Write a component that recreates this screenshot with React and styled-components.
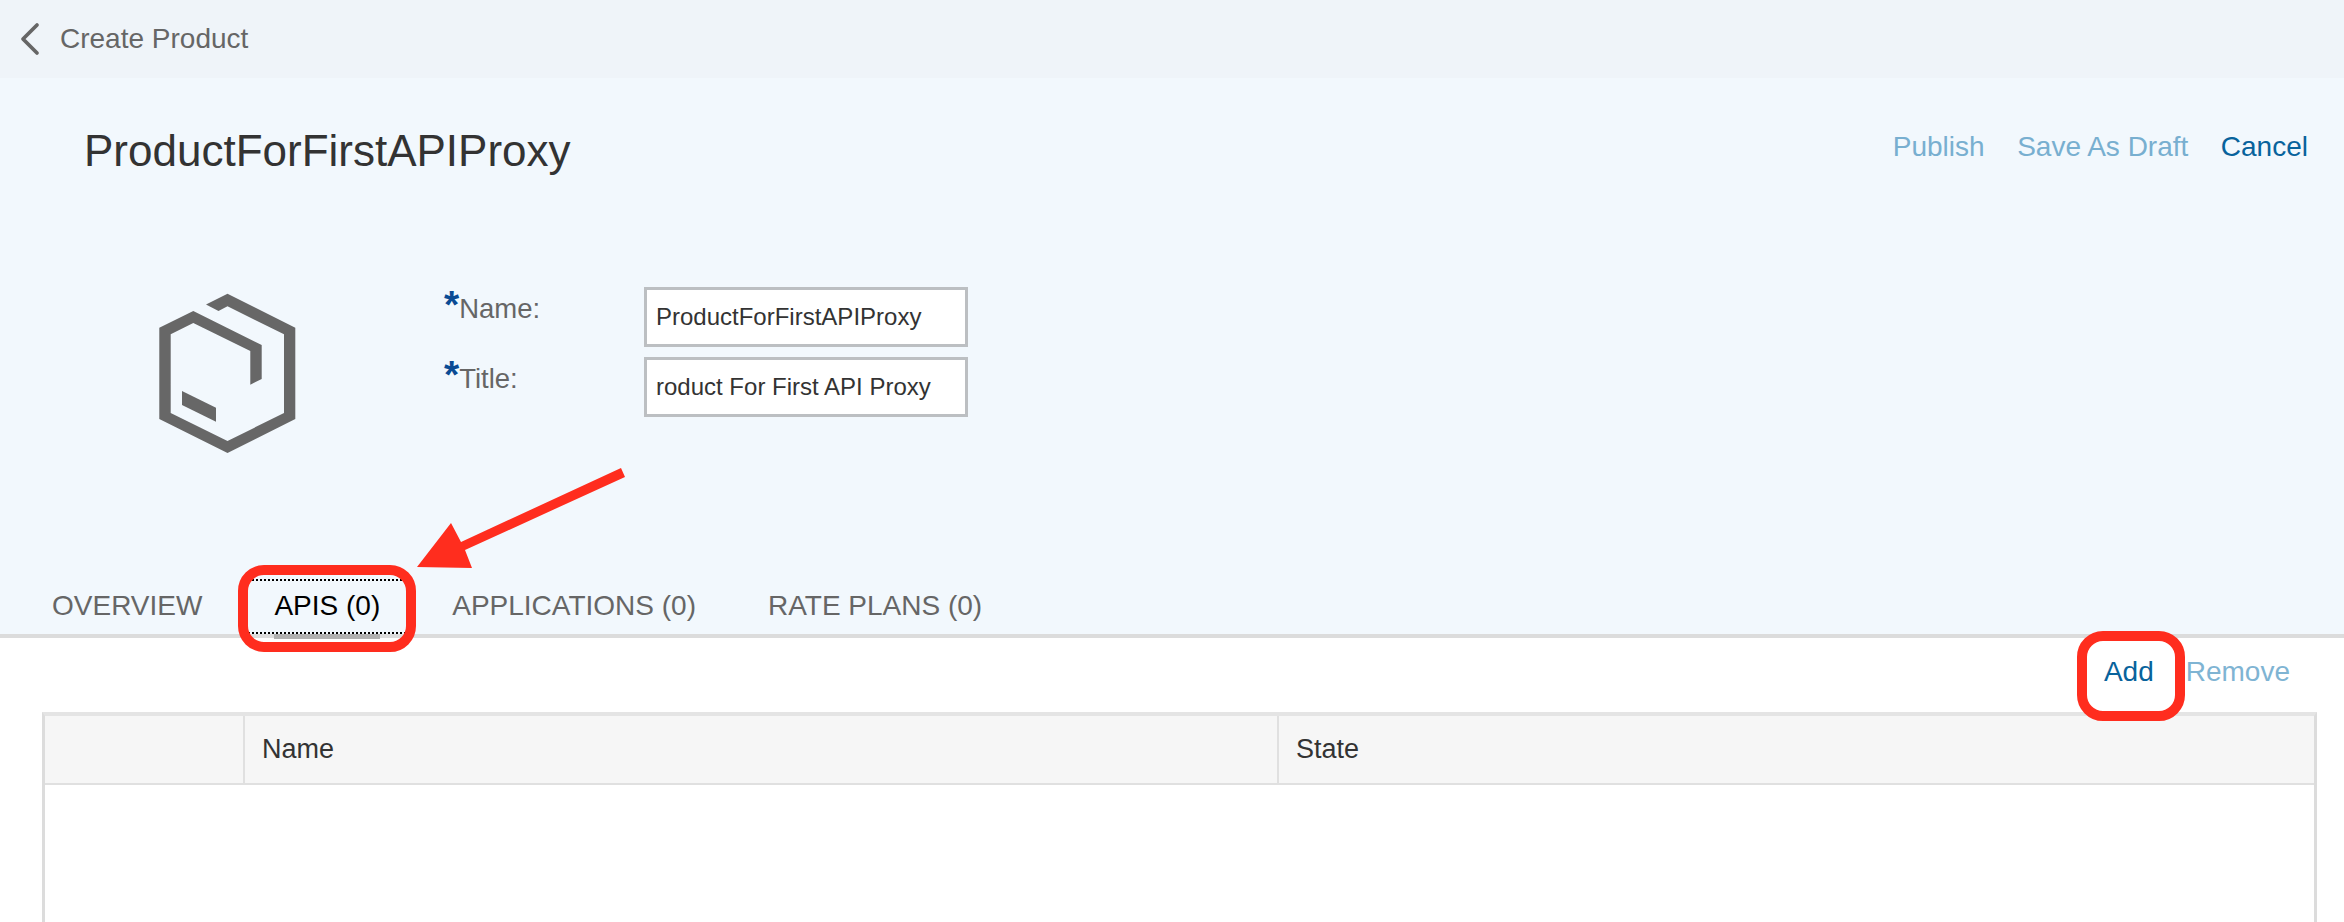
import styled, { createGlobalStyle } from 'styled-components';
import { ChevronLeft } from 'lucide-react';

const GlobalStyle = createGlobalStyle`
  html, body {
    margin: 0;
    padding: 0;
    background: #fff;
    font-family: "Liberation Sans", Arial, sans-serif;
  }
`;

const App = () => {
  return (
    <Page>
      <GlobalStyle />
      <TopBar>
        <BackIcon size={56} strokeWidth={1.6} />
        <TopBarTitle>Create Product</TopBarTitle>
      </TopBar>
      <HeaderPanel>
        <TitleRow>
          <ProductTitle>ProductForFirstAPIProxy</ProductTitle>
          <Actions>
            <ActionLink $disabled>Publish</ActionLink>
            <ActionLink $disabled>Save As Draft</ActionLink>
            <ActionLink>Cancel</ActionLink>
          </Actions>
        </TitleRow>
        <FormRow>
          <BoxIcon viewBox="0 0 180 180" aria-hidden="true">
            <path d="M66 23.500L87.500 12.700L155.300 46.700V138L87.500 172L19.300 138V46.700L53.300 30L121.700 64V98L110.300 103.700V70L53.300 42L30.700 53.300V132L87.500 160L144 132V53.300L87.500 25.300L78.500 30Z" />
            <path d="M42 110L76 126.700V140.700L42 124Z" />
          </BoxIcon>
          <Fields>
            <FieldRow>
              <FieldLabel><Required>*</Required>Name:</FieldLabel>
              <TextInput readOnly value="ProductForFirstAPIProxy" />
            </FieldRow>
            <FieldRow>
              <FieldLabel><Required>*</Required>Title:</FieldLabel>
              <TextInput readOnly value="roduct For First API Proxy" />
            </FieldRow>
          </Fields>
        </FormRow>
        <Tabs>
          <Tab>OVERVIEW</Tab>
          <Tab $active>
            APIS (0)
            <FocusBox />
            <TabRing />
          </Tab>
          <Tab>APPLICATIONS (0)</Tab>
          <Tab>RATE PLANS (0)</Tab>
        </Tabs>
      </HeaderPanel>
      <Toolbar>
        <ToolbarButton>
          Add
          <AddRing />
        </ToolbarButton>
        <ToolbarLink>Remove</ToolbarLink>
      </Toolbar>
      <Table>
        <HeaderCell />
        <HeaderCell>Name</HeaderCell>
        <HeaderCell>State</HeaderCell>
      </Table>
      <Arrow viewBox="0 0 220 110" aria-hidden="true">
        <polygon points="204,3 208,12 48,85 55,103 0,102 34,58 44,77" />
      </Arrow>
    </Page>
  );
};

const Page = styled.div`
  position: relative;
  display: flex;
  flex-direction: column;
  height: 922px;
  overflow: hidden;
  background: #fff;
`;
const TopBar = styled.div`
  display: flex;
  align-items: center;
  height: 78px;
  background: #eff4f9;
`;
const BackIcon = styled(ChevronLeft)`
  color: #666;
  margin-left: 2px;
  margin-right: 2px;
`;
const TopBarTitle = styled.span`
  font-size: 28px;
  color: #666;
`;
const HeaderPanel = styled.div`
  display: flex;
  flex-direction: column;
  height: 556px;
  background: #f2f8fd;
`;
const TitleRow = styled.div`
  display: flex;
  align-items: center;
  justify-content: space-between;
  height: 70px;
  margin-top: 38px;
  padding: 0 36px 0 84px;
`;
const ProductTitle = styled.h1`
  margin: 0;
  font-size: 44px;
  font-weight: 400;
  color: #333;
`;
const Actions = styled.div`
  display: flex;
  gap: 32.500px;
  margin-bottom: 8px;
`;
const ActionLink = styled.a`
  font-size: 28px;
  color: ${(p) => (p.$disabled ? '#78afd0' : '#08639c')};
`;
const FormRow = styled.div`
  display: flex;
  align-items: flex-start;
  margin-top: 94px;
  padding-left: 140px;
`;
const BoxIcon = styled.svg`
  width: 180px;
  height: 180px;
  margin-top: 1px;
  fill: #676767;
`;
const Fields = styled.div`
  display: flex;
  flex-direction: column;
  gap: 10px;
  margin-left: 124px;
  margin-top: 7px;
`;
const FieldRow = styled.div`
  display: flex;
  align-items: flex-start;
`;
const FieldLabel = styled.label`
  width: 200px;
  font-size: 27.500px;
  line-height: 44px;
  color: #666;
`;
const Required = styled.span`
  font-weight: 700;
  font-size: 39px;
  line-height: 0;
  color: #0a4b94;
`;
const TextInput = styled.input`
  box-sizing: border-box;
  width: 324px;
  height: 60px;
  padding: 0 9px;
  border: 3px solid #bcbfc2;
  border-radius: 0;
  background: #fff;
  font-family: inherit;
  font-size: 24px;
  color: #333;
  outline: none;
`;
const Tabs = styled.div`
  display: flex;
  margin-top: auto;
  padding-left: 16px;
`;
const Tab = styled.div`
  position: relative;
  display: flex;
  align-items: center;
  height: 69px;
  padding: 12px 36px 0;
  box-sizing: border-box;
  font-size: 28px;
  white-space: nowrap;
  color: ${(p) => (p.$active ? '#000' : '#666')};
  ${(p) =>
    p.$active &&
    `&::after {
      content: '';
      position: absolute;
      left: 36px;
      right: 36px;
      bottom: -5px;
      height: 5px;
      background: #b0b0b0;
    }`}
`;
const FocusBox = styled.div`
  position: absolute;
  left: 10px;
  right: 10px;
  top: 14px;
  height: 55px;
  box-sizing: border-box;
  border-top: 2px dotted #000;
  border-bottom: 2px dotted #000;
`;
const TabRing = styled.div`
  position: absolute;
  z-index: 1;
  left: 0;
  right: 0;
  top: 0;
  height: 87px;
  box-sizing: border-box;
  border: 10px solid #ff2d1e;
  border-radius: 26px;
`;
const Toolbar = styled.div`
  display: flex;
  justify-content: flex-end;
  align-items: center;
  gap: 32px;
  height: 78px;
  padding: 0 54px 6px 0;
  border-top: 4px solid #dcdcdc;
  box-sizing: border-box;
`;
const ToolbarButton = styled.a`
  position: relative;
  font-size: 28px;
  color: #08639c;
`;
const AddRing = styled.div`
  position: absolute;
  left: -27px;
  right: -31px;
  top: -25px;
  height: 90px;
  box-sizing: border-box;
  border: 10px solid #ff2d1e;
  border-radius: 26px;
`;
const ToolbarLink = styled.a`
  font-size: 28px;
  color: #7fb4d3;
`;
const Table = styled.div`
  flex: 1;
  display: grid;
  grid-template-columns: 200px 1034px 1fr;
  grid-template-rows: 69px;
  margin: 0 27px 0 42px;
  border-top: 4px solid #e4e4e4;
  border-left: 3px solid #dcdcdc;
  border-right: 3px solid #dcdcdc;
`;
const HeaderCell = styled.div`
  display: flex;
  align-items: center;
  padding-left: 17px;
  background: #f6f6f6;
  border-bottom: 2px solid #e0e0e0;
  border-right: 2px solid #e0e0e0;
  font-size: 27px;
  color: #333;
  &:last-child {
    border-right: 0;
  }
`;
const Arrow = styled.svg`
  position: absolute;
  left: 417px;
  top: 465px;
  width: 220px;
  height: 110px;
  fill: #ff2d1e;
`;

export default App;
